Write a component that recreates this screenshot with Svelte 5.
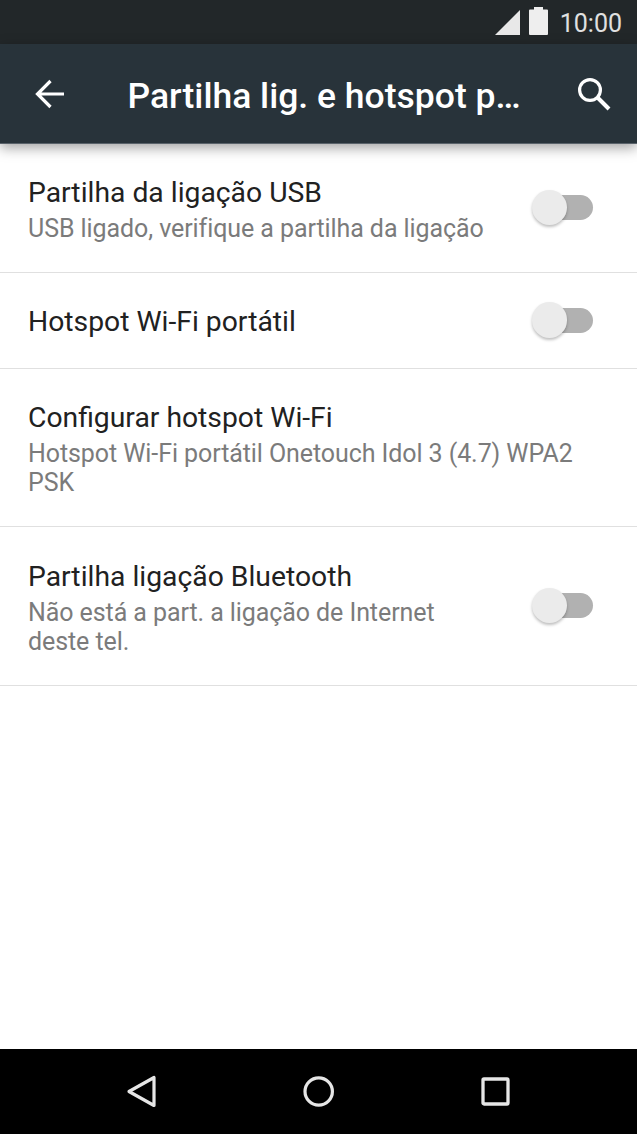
<script>
  const items = [
    { title: 'Partilha da ligação USB', lines: ['USB ligado, verifique a partilha da ligação'], toggle: true, h: 129 },
    { title: 'Hotspot Wi-Fi portátil', lines: [], toggle: true, h: 96 },
    { title: 'Configurar hotspot Wi-Fi', lines: ['Hotspot Wi-Fi portátil Onetouch Idol 3 (4.7) WPA2', 'PSK'], toggle: false, h: 158 },
    { title: 'Partilha ligação Bluetooth', lines: ['Não está a part. a ligação de Internet', 'deste tel.'], toggle: true, h: 159 }
  ];
</script>

<div class="screen">
  <div class="status">
    <svg class="signal" width="25" height="25" viewBox="0 0 25 25"><path d="M25 0V25H0z" fill="#e8e8e8" /></svg>
    <svg class="battery" width="19" height="28" viewBox="0 0 19 28"><path d="M5 0h9v2.500h4q1 0 1 1V27q0 1-1 1H1q-1 0-1-1V3.500q0-1 1-1h4z" fill="#eee" /></svg>
    <span class="clock">10:00</span>
  </div>
  <header>
    <svg class="back" width="30" height="30" viewBox="0 0 30 30"><path d="M29 15H3M15.500 2L2.500 15l13 13" fill="none" stroke="#fff" stroke-width="3.200" /></svg>
    <h1>Partilha lig. e hotspot p…</h1>
    <svg class="search" width="34" height="34" viewBox="0 0 34 34"><circle cx="13" cy="13" r="10.400" fill="none" stroke="#fff" stroke-width="3.200" /><path d="M20.500 20.500L32 32" stroke="#fff" stroke-width="4" /></svg>
  </header>
  <main>
    {#each items as item}
      <section class:single={!item.lines.length} style:height={item.h + 'px'}>
        <div class="text">
          <h2>{item.title}</h2>
          {#each item.lines as line}<p>{line}</p>{/each}
        </div>
        {#if item.toggle}
          <div class="toggle"><i></i></div>
        {/if}
      </section>
    {/each}
  </main>
  <nav>
    <svg width="32" height="36" viewBox="0 0 32 36"><path d="M28 3.500V31.500L3 17.500z" fill="none" stroke="#e6e6e6" stroke-width="3.200" stroke-linejoin="round" /></svg>
    <svg width="32" height="36" viewBox="0 0 32 36"><circle cx="15.700" cy="17.500" r="13.700" fill="none" stroke="#e6e6e6" stroke-width="3.200" /></svg>
    <svg width="32" height="36" viewBox="0 0 32 36"><rect x="3" y="5" width="25" height="25" rx="1" fill="none" stroke="#e6e6e6" stroke-width="3.300" /></svg>
  </nav>
</div>

<style>
  .screen { width: 637px; height: 1134px; display: flex; flex-direction: column; background: #fff; font-family: Roboto, sans-serif; overflow: hidden; }
  .status { height: 44px; flex: none; background: #222729; display: flex; align-items: flex-start; justify-content: flex-end; padding-right: 15px; box-sizing: border-box; }
  .signal { margin: 10px 9px 0 0; }
  .battery { margin: 7px 12px 0 0; }
  .clock { color: #e0e0e0; font-size: 25px; line-height: 30px; margin-top: 9px; }
  header { height: 100px; flex: none; background: #28333a; display: flex; align-items: center; box-sizing: border-box; padding: 0 26px 0 35px; border-bottom: 1px solid #59626a; box-shadow: 0 4px 12px rgba(0,0,0,.36); }
  h1 { flex: 1; margin: 5px 0 0 62.500px; color: #fff; font-size: 35.500px; line-height: 42px; font-weight: 500; white-space: nowrap; }
  main { flex: 1; }
  section { display: flex; align-items: center; justify-content: space-between; padding: 0 44px 0 28px; box-sizing: border-box; border-bottom: 1px solid #e0e0e0; }
  .text { white-space: nowrap; padding-top: 2px; }
  h2 { margin: 0 0 3px; font-size: 28.300px; line-height: 36px; font-weight: 400; color: #212121; }
  .single h2 { margin-bottom: 0; }
  p { margin: 0; font-size: 25px; letter-spacing: -.08px; line-height: 29px; color: #7b7b7b; }
  .toggle { width: 61.500px; height: 36px; display: flex; align-items: center; position: relative; margin-bottom: 1px; }
  .toggle::before { content: ''; position: absolute; right: 0; top: 5.500px; width: 44px; height: 25px; border-radius: 13px; background: #b1b1b1; }
  .toggle i { position: relative; width: 35.500px; height: 35.500px; border-radius: 50%; background: #ebebeb; box-shadow: 0 2px 3px rgba(0,0,0,.25); }
  nav { height: 85px; flex: none; background: #000; display: flex; justify-content: center; align-items: center; gap: 145px; }
</style>
